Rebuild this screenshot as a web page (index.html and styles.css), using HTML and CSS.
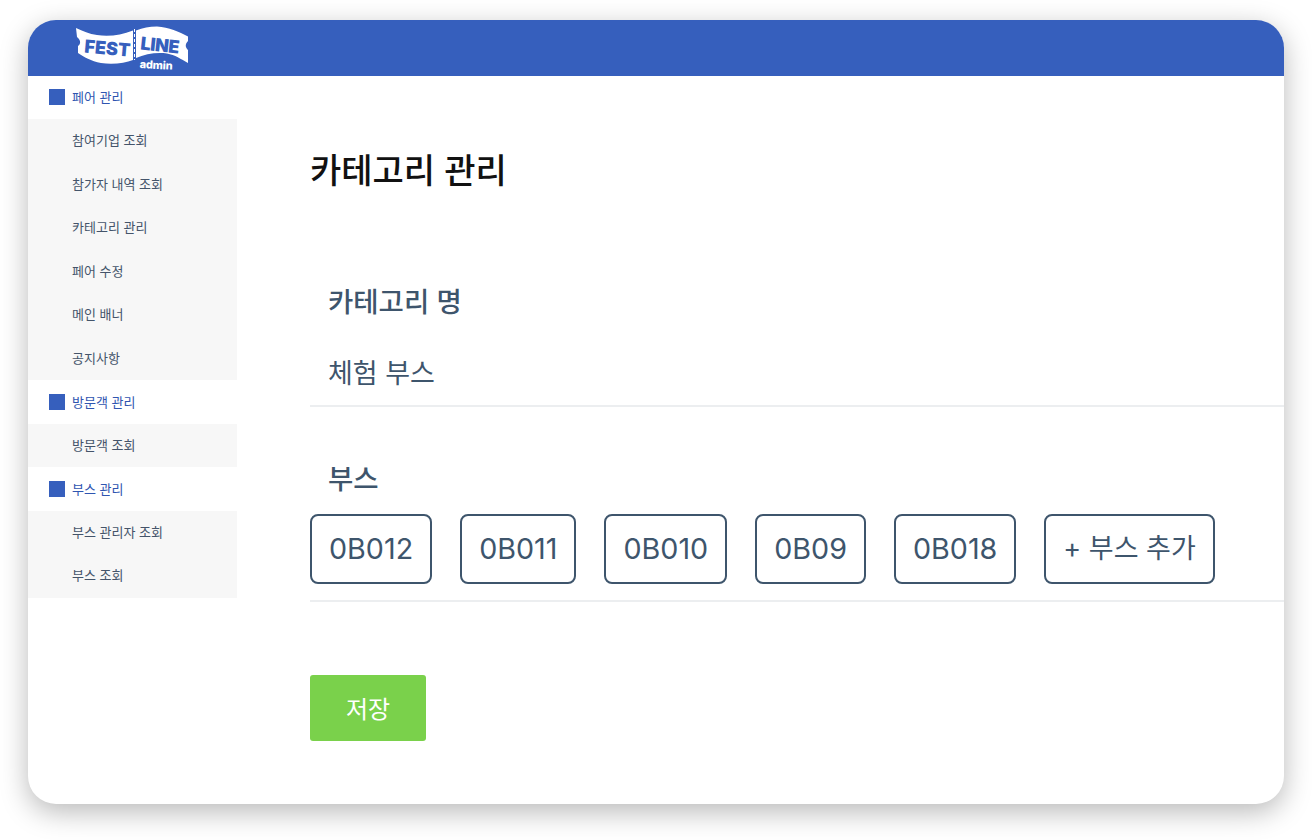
FILE: index.html
```html
<!DOCTYPE html>
<html lang="ko">
<head>
<meta charset="utf-8">
<title>카테고리 관리</title>
<link rel="stylesheet" href="styles.css">
</head>
<body>
<div class="window">
  <header class="topbar">
    <svg class="logo" width="114" height="56" viewBox="0 0 114 56">
      <path class="ticket" d="M1 8 C8 11 14 14 22 15 C34 17 46 15 58 10.5 L58 40 C50 43 38 45 26 43 C16 41 9 37 3 33 L3 26 C6 24 6 20 2 17 Z"/>
      <path class="ticket" d="M61 10.5 C68 8 74 6.5 82 6.5 C94 7 104 12 113 16.5 L113 21 C110 24 110 27 113 30 L113 43 C106 39 100 35 92 33.5 C82 32 70 34 61 38 Z"/>
      <path class="perf" d="M59.5 9 V40"/>
      <text class="logo-word" transform="translate(9 32.5) rotate(5)" textLength="46">FEST</text>
      <text class="logo-word" transform="translate(65 29.5) rotate(6)" textLength="39">LINE</text>
      <text class="logo-sub" transform="translate(64.5 48) rotate(3)" textLength="33">admin</text>
    </svg>
  </header>
  <div class="body">
    <nav class="sidebar">
      <div class="nav-group"><span class="nav-mark"></span>페어 관리</div>
      <ul class="nav-list">
        <li>참여기업 조회</li>
        <li>참가자 내역 조회</li>
        <li>카테고리 관리</li>
        <li>페어 수정</li>
        <li>메인 배너</li>
        <li>공지사항</li>
      </ul>
      <div class="nav-group"><span class="nav-mark"></span>방문객 관리</div>
      <ul class="nav-list">
        <li>방문객 조회</li>
      </ul>
      <div class="nav-group"><span class="nav-mark"></span>부스 관리</div>
      <ul class="nav-list">
        <li>부스 관리자 조회</li>
        <li>부스 조회</li>
      </ul>
    </nav>
    <main class="content">
      <h1 class="page-title">카테고리 관리</h1>
      <section class="field name-field">
        <h2 class="field-label">카테고리 명</h2>
        <div class="field-value">체험 부스</div>
      </section>
      <section class="field booth-field">
        <h2 class="field-label">부스</h2>
        <div class="chips">
          <button class="chip">0B012</button>
          <button class="chip">0B011</button>
          <button class="chip">0B010</button>
          <button class="chip">0B09</button>
          <button class="chip">0B018</button>
          <button class="chip chip-add">+ 부스 추가</button>
        </div>
      </section>
      <button class="save">저장</button>
    </main>
  </div>
</div>
</body>
</html>
```
FILE: styles.css
```css
* { box-sizing: border-box; }
html, body { margin: 0; height: 100%; background: #fff; }
body {
  padding: 20px 28px 36px;
  font-family: Inter, "Noto Sans CJK KR", sans-serif;
  overflow: hidden;
}
.window {
  height: 784px;
  border-radius: 28px;
  background: #fff;
  overflow: hidden;
  box-shadow: 0 8px 28px rgba(0, 0, 0, .28);
  display: flex;
  flex-direction: column;
}
.topbar { height: 56px; background: #365fbd; padding-left: 47px; flex: none; }
.logo { display: block; }
.ticket { fill: #fff; }
.perf { stroke: #fff; stroke-width: 1; stroke-dasharray: 3 2; fill: none; }
.logo-word { font: 900 18px Inter, sans-serif; fill: #365fbd; }
.logo-sub { font: 800 11px Inter, sans-serif; fill: #fff; }
.body { flex: 1; display: flex; }
.sidebar { width: 209px; flex: none; }
.nav-group {
  height: 43.45px;
  padding: 0 0 2px 21px;
  display: flex;
  align-items: center;
  gap: 7px;
  font-size: 13px;
  color: #2f55b0;
}
.nav-mark { width: 16px; height: 16px; margin-top: 1px; background: #365fbd; }
.nav-list { margin: 0; padding: 0; list-style: none; background: #f7f7f7; }
.nav-list li {
  height: 43.5px;
  padding: 0 0 3px 44px;
  display: flex;
  align-items: center;
  font-size: 13px;
  color: #44546a;
}
.content { flex: 1; min-width: 0; padding: 70px 0 0 73px; }
.page-title { margin: 0; font-size: 34px; line-height: 50px; font-weight: 500; color: #111; }
.field { border-bottom: 2px solid #eceef0; }
.name-field { margin-top: 86px; height: 125px; }
.booth-field { margin-top: 52px; height: 143px; }
.field-label { margin: 0; padding-left: 18px; font-size: 27.5px; line-height: 40px; font-weight: 500; color: #3e556c; }
.field-value { margin-top: 32px; padding-left: 18px; font-size: 27px; line-height: 40px; color: #3e556c; }
.chips { display: flex; gap: 28px; margin-top: 15px; }
.chip {
  height: 70px;
  padding: 0 17px;
  border: 2px solid #3e556c;
  border-radius: 8px;
  background: #fff;
  font: 400 28.7px/36px Inter, "Noto Sans CJK KR", sans-serif;
  color: #3e556c;
}
.chip-add { font-size: 27px; }
.save {
  display: block;
  margin-top: 73px;
  width: 116px;
  height: 66px;
  padding: 0 0 2px;
  border: 0;
  border-radius: 3px;
  background: #7ad14b;
  color: #fff;
  font: 400 24px Inter, "Noto Sans CJK KR", sans-serif;
}
```
